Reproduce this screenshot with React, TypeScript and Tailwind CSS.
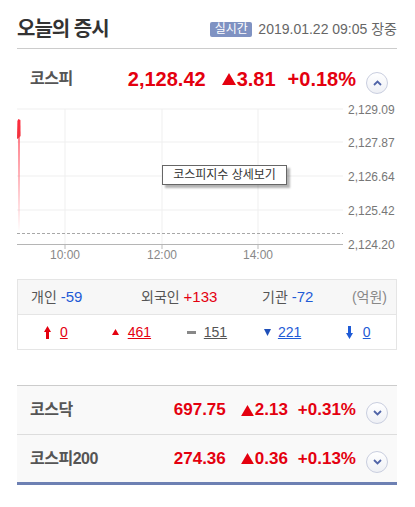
import React from 'react';

const FONT = { fontFamily: '"Liberation Sans", "Noto Sans CJK KR", sans-serif' };

function UpTriangle({ className = '' }: { className?: string }) {
  return (
    <svg viewBox="0 0 14 12" className={className}>
      <path d="M7 0 L14 12 L0 12 Z" fill="#e4000f" />
    </svg>
  );
}

function CircleToggle({ up }: { up?: boolean }) {
  return (
    <button className="flex h-[22px] w-[22px] shrink-0 items-center justify-center rounded-full border border-[#c9cedf] bg-gradient-to-b from-white to-[#eef0f5]">
      <svg viewBox="0 0 9 6" className="h-[6px] w-[9px]">
        <path
          d={up ? 'M1 5 L4.5 1.5 L8 5' : 'M1 1 L4.5 4.5 L8 1'}
          fill="none"
          stroke="#5064a8"
          strokeWidth="1.8"
        />
      </svg>
    </button>
  );
}

function IndexRow({
  name,
  value,
  change,
  rate,
  big,
  up,
}: {
  name: string;
  value: string;
  change: string;
  rate: string;
  big?: boolean;
  up?: boolean;
}) {
  return (
    <div className="flex items-center pl-[13px] pr-[9px]">
      <span className="text-[16px] font-bold tracking-[-0.5px] text-[#555]">{name}</span>
      <div
        className={`ml-auto flex items-center font-bold text-[#e4000f] ${
          big ? 'text-[20px]' : 'text-[17px]'
        }`}
      >
        <span className={big ? 'mr-[16px]' : 'mr-[15px]'}>{value}</span>
        <UpTriangle className={big ? 'mr-[1px] h-[12px] w-[14px]' : 'mr-[1px] h-[11px] w-[13px]'} />
        <span className={big ? 'mr-[12px]' : 'mr-[10px]'}>{change}</span>
        <span>{rate}</span>
      </div>
      <div className={big ? 'ml-[10px] mt-[8px]' : 'ml-[10px] mt-[6px]'}>
        <CircleToggle up={up} />
      </div>
    </div>
  );
}

function Chart() {
  const gridY = [10, 43, 77, 111];
  const gridX = [48, 145, 241];
  const labels = [
    { y: 11, t: '2,129.09' },
    { y: 43.5, t: '2,127.87' },
    { y: 77.5, t: '2,126.64' },
    { y: 112, t: '2,125.42' },
    { y: 145.5, t: '2,124.20' },
  ];
  const times = ['10:00', '12:00', '14:00'];
  return (
    <div className="relative h-[170px] w-[398px]">
      <svg width="398" height="170" viewBox="0 0 398 170" style={FONT}>
        <defs>
          <linearGradient id="fade" x1="0" y1="0" x2="0" y2="1">
            <stop offset="0" stopColor="#ff4a5a" stopOpacity="0.7" />
            <stop offset="1" stopColor="#ff4a5a" stopOpacity="0" />
          </linearGradient>
          <linearGradient id="spike" x1="0" y1="0" x2="0" y2="1">
            <stop offset="0" stopColor="#ff2a3c" />
            <stop offset="1" stopColor="#f0343f" />
          </linearGradient>
        </defs>
        {gridY.map((y) => (
          <line key={y} x1="0" x2="326" y1={y} y2={y} stroke="#efefef" strokeWidth="1" />
        ))}
        {gridX.map((x) => (
          <g key={x}>
            <line x1={x} x2={x} y1="10" y2="145" stroke="#efefef" strokeWidth="1" />
            <line x1={x} x2={x} y1="145" y2="150" stroke="#bbbbbb" strokeWidth="1" />
          </g>
        ))}
        <line x1="0" x2="326" y1="134.5" y2="134.5" stroke="#a8a8a8" strokeWidth="1" strokeDasharray="3 2" />
        <line x1="0" x2="326" y1="145.5" y2="145.5" stroke="#b5b5b5" strokeWidth="1" />
        <rect x="1" y="38" width="2" height="95" fill="url(#fade)" />
        <path d="M0 40 L0.4 22 L1.4 20 L3.4 21 L3.6 37 L1.6 39 Z" fill="url(#spike)" />
        {labels.map((l) => (
          <text key={l.t} x="331" y={l.y} fontSize="12" fill="#777" dominantBaseline="central">
            {l.t}
          </text>
        ))}
        {times.map((t, i) => (
          <text key={t} x={gridX[i]} y="156" fontSize="12" fill="#888" textAnchor="middle" dominantBaseline="central">
            {t}
          </text>
        ))}
      </svg>
      <div className="absolute left-[145px] top-[66px] flex h-[20px] w-[125px] items-center justify-center border border-[#666] bg-white text-[12px] text-[#333] shadow-[3px_3px_2px_rgba(0,0,0,0.3)]">
        코스피지수 상세보기
      </div>
    </div>
  );
}

export default function App() {
  return (
    <div className="w-[415px] bg-white pl-[17px] pr-[18px]" style={FONT}>
      <div className="flex h-[49px] items-center justify-between border-b border-[#cccccc] pt-[10px]">
        <h2 className="text-[20px] font-bold tracking-[-1px] text-[#333]">오늘의 증시</h2>
        <div className="flex items-center">
          <span className="flex h-[15px] w-[42px] items-center justify-center rounded-[2px] bg-[#7f92c2] text-[12px] leading-none text-white">
            실시간
          </span>
          <span className="ml-[6px] text-[14px] text-[#666]">2019.01.22 09:05 장중</span>
        </div>
      </div>

      <div className="flex h-[50px] flex-col justify-center pt-[10px]">
        <IndexRow name="코스피" value="2,128.42" change="3.81" rate="+0.18%" big up />
      </div>

      <Chart />

      <div className="mt-[10px] border border-[#e5e5e5]">
        <div className="flex h-[34px] items-center bg-[#f7f7f7] pl-[13px] pr-[9px] text-[14px] text-[#555]">
          <div className="w-[110px]">
            개인 <span className="text-[15px] text-[#1f5bd6]">-59</span>
          </div>
          <div className="w-[121px]">
            외국인 <span className="text-[15px] text-[#e4000f]">+133</span>
          </div>
          <div>
            기관 <span className="text-[15px] text-[#1f5bd6]">-72</span>
          </div>
          <div className="ml-auto text-[#888]">(억원)</div>
        </div>
        <div className="flex h-[35px] items-center border-t border-[#e5e5e5] text-[14px]">
          <div className="flex flex-1 items-center justify-center gap-[9px]">
            <svg viewBox="0 0 7 13" className="h-[13px] w-[7px]">
              <path d="M3.5 0 L7 6 L5 6 L5 13 L2 13 L2 6 L0 6 Z" fill="#e4000f" />
            </svg>
            <span className="text-[#e4000f] underline">0</span>
          </div>
          <div className="flex flex-1 items-center justify-center gap-[9px]">
            <svg viewBox="0 0 7 6" className="h-[6px] w-[7px]">
              <path d="M3.5 0 L7 6 L0 6 Z" fill="#e4000f" />
            </svg>
            <span className="text-[#e4000f] underline">461</span>
          </div>
          <div className="flex flex-1 items-center justify-center gap-[8px]">
            <span className="h-[3px] w-[9px] bg-[#888]" />
            <span className="text-[#555] underline">151</span>
          </div>
          <div className="flex flex-1 items-center justify-center gap-[7px]">
            <svg viewBox="0 0 7 7" className="h-[7px] w-[7px]">
              <path d="M0 0 L7 0 L3.5 7 Z" fill="#1f4fb8" />
            </svg>
            <span className="text-[#1f5bd6] underline">221</span>
          </div>
          <div className="flex flex-1 items-center justify-center gap-[10px]">
            <svg viewBox="0 0 7 13" className="h-[13px] w-[7px]">
              <path d="M3.5 13 L7 7 L5 7 L5 0 L2 0 L2 7 L0 7 Z" fill="#1f5bd6" />
            </svg>
            <span className="text-[#1f5bd6] underline">0</span>
          </div>
        </div>
      </div>

      <div className="mt-[35px] border-t border-[#cccccc] bg-[#f9f9f9]">
        <div className="flex h-[49px] flex-col justify-center border-b border-[#dddddd]">
          <IndexRow name="코스닥" value="697.75" change="2.13" rate="+0.31%" />
        </div>
        <div className="flex h-[50px] flex-col justify-center border-b-[3px] border-[#6d80b3]">
          <IndexRow name="코스피200" value="274.36" change="0.36" rate="+0.13%" />
        </div>
      </div>
      <div className="h-[19px]" />
    </div>
  );
}
